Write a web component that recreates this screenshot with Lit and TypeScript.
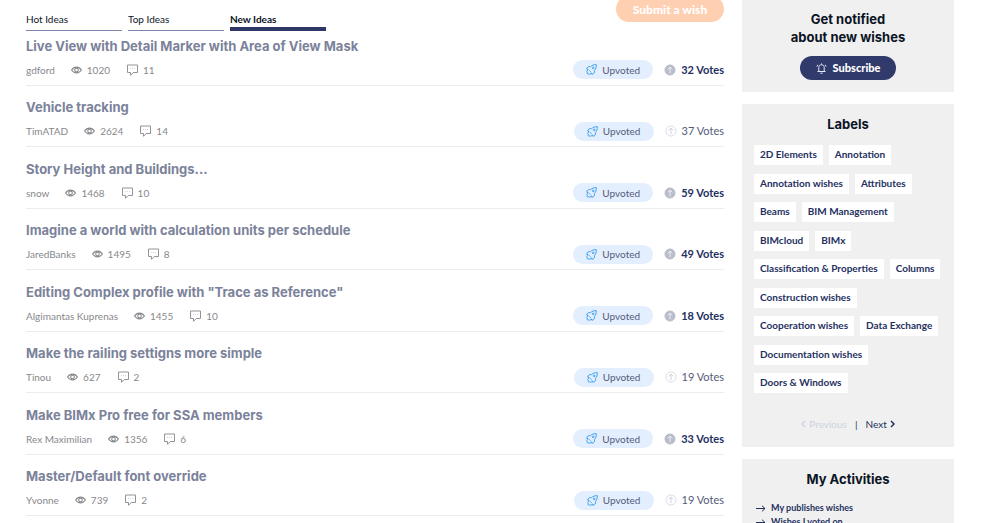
import { LitElement, html, css, svg } from "lit";
import { customElement } from "lit/decorators.js";
import { classMap } from "lit/directives/class-map.js";

interface Idea {
  title: string;
  author: string;
  views: number;
  comments: number;
  votes: number;
  voted: boolean;
}

const ideas: Idea[] = [
  { title: "Live View with Detail Marker with Area of View Mask", author: "gdford", views: 1020, comments: 11, votes: 32, voted: true },
  { title: "Vehicle tracking", author: "TimATAD", views: 2624, comments: 14, votes: 37, voted: false },
  { title: "Story Height and Buildings...", author: "snow", views: 1468, comments: 10, votes: 59, voted: true },
  { title: "Imagine a world with calculation units per schedule", author: "JaredBanks", views: 1495, comments: 8, votes: 49, voted: true },
  { title: 'Editing Complex profile with "Trace as Reference"', author: "Algimantas Kuprenas", views: 1455, comments: 10, votes: 18, voted: true },
  { title: "Make the railing settigns more simple", author: "Tinou", views: 627, comments: 2, votes: 19, voted: false },
  { title: "Make BIMx Pro free for SSA members", author: "Rex Maximilian", views: 1356, comments: 6, votes: 33, voted: true },
  { title: "Master/Default font override", author: "Yvonne", views: 739, comments: 2, votes: 19, voted: false },
];

const labels = [
  "2D Elements", "Annotation", "Annotation wishes", "Attributes", "Beams", "BIM Management",
  "BIMcloud", "BIMx", "Classification & Properties", "Columns", "Construction wishes",
  "Cooperation wishes", "Data Exchange", "Documentation wishes", "Doors & Windows",
];

const eye = svg`<svg class="icon" width="11" height="8" viewBox="0 0 11 8" fill="none" stroke="currentColor" stroke-width="1.100" aria-hidden="true"><path d="M.6 4C3 .2 8 .2 10.400 4C8 7.800 3 7.800 .6 4Z"/><circle cx="5.500" cy="4" r="1.800"/></svg>`;
const bubble = svg`<svg class="icon" width="11" height="12" viewBox="0 0 11 12" fill="none" stroke="currentColor" stroke-width=".9" aria-hidden="true"><path d="M.5 1H10.500V8.500H6.300L3.500 11.300V8.500H.5Z"/><path d="M3 4.500H8" stroke-dasharray="1 1" opacity=".4"/></svg>`;
const rocket = svg`<svg class="icon" width="11" height="11" viewBox="0 0 11 11" fill="none" stroke="#3ba0ec" stroke-linejoin="round" aria-hidden="true"><path d="M10.300 .7C7.600 .6 5.900 1.300 4.600 2.700C2.700 2 1 3.200 .7 5.100L2.300 5.800C.8 6.500 .4 7.500 1.200 8.300C.7 9.600 1.500 10.400 2.800 9.900C3.600 10.700 4.700 10.200 5.200 8.800L5.900 10.300C7.900 10 9 8.400 8.400 6.500C9.700 5.200 10.400 3.400 10.300 .7Z"/><circle cx="7.200" cy="3.900" r=".8"/><path d="M3.300 6C3.400 7 4 7.600 5 7.700" opacity=".6"/></svg>`;
const bell = svg`<svg class="icon" width="11" height="11" viewBox="0 0 11 11" fill="none" stroke="#e6e8f2" aria-hidden="true"><path d="M1.500 8.500H9.500M2.800 8.500V4.300C2.800 .9 8.200 .9 8.200 4.300V8.500M4.400 10.200H6.600M1 3.600L1.700 1.800M10 3.600L9.300 1.800M5.500 .4V1.600"/></svg>`;
const arrow = svg`<svg class="icon" width="10" height="7" viewBox="0 0 10 7" fill="none" stroke="currentColor" aria-hidden="true"><path d="M0 3.500H9M6 .7L9 3.500L6 6.300"/></svg>`;
const chevron = (d: string) => svg`<svg class="icon" width="5" height="8" viewBox="0 0 5 8" fill="none" stroke="currentColor" stroke-width="1.500" aria-hidden="true"><path d=${d}/></svg>`;
const voteIcon = (on: boolean) => svg`<svg class="icon" width="12" height="12" viewBox="0 0 12 12" fill="none" aria-hidden="true"><circle cx="6" cy="6" r="5" fill=${on ? "#b9bcca" : "none"} stroke=${on ? "#b9bcca" : "#dcdee7"}/><path d="M6 9.200V3M3.700 5.400L6 3.100L8.300 5.400" stroke=${on ? "#eceef3" : "#cfd2de"}/></svg>`;

@customElement("app-root")
export class AppRoot extends LitElement {
  static styles = css`
    :host {
      display: block;
      height: 100vh;
      overflow: hidden;
      background: #fff;
      color: #0b1424;
      font: 10px/14px Lato, "Open Sans", sans-serif;
    }
    * { box-sizing: border-box; }
    a { color: inherit; text-decoration: none; }
    button { border: 0; margin: 0; font: inherit; cursor: pointer; }
    h2, h3, ul { margin: 0; padding: 0; list-style: none; }
    .icon { display: block; flex: none; }
    .page {
      display: grid;
      grid-template-columns: minmax(0, 1fr) 212px;
      gap: 18px;
      padding: 0 44px 0 26px;
    }
    .top { display: flex; justify-content: space-between; align-items: flex-start; height: 31px; }
    .tabs { display: flex; gap: 6px; padding-top: 12px; }
    .tab { width: 96px; height: 19px; border-bottom: 1px solid #7f86ae; white-space: nowrap; }
    .tab.active { border-bottom: 4px solid #2e3766; font-weight: 700; }
    .submit {
      height: 26px;
      width: 108px;
      margin-top: -4px;
      padding: 2px 0 0;
      border-radius: 13px;
      background: #ffcfb1;
      color: #fff;
      font-size: 12px;
      font-weight: 900;
    }
    .ideas { display: grid; grid-auto-rows: 1fr; min-height: 492px; margin-top: -7px; }
    .idea { display: flex; flex-direction: column; justify-content: flex-end; border-bottom: 1px solid #ececee; padding-bottom: 5px; }
    .title { font: 700 13px/18px Inter, sans-serif; color: #7b829a; }
    .row { display: flex; align-items: center; justify-content: space-between; margin-top: 5px; height: 20px; }
    .meta { display: flex; align-items: center; color: #87888c; }
    .views { display: flex; align-items: center; gap: 5px; margin: 0 17px 0 16px; }
    .comments { display: flex; align-items: center; gap: 5px; }
    .voting { display: flex; align-items: center; gap: 11px; }
    .upvoted {
      display: flex; align-items: center; justify-content: center; gap: 5px;
      width: 80px; height: 19px; padding: 0; border-radius: 10px;
      background: #e3eeff; color: #545b78;
    }
    .votes { display: flex; align-items: center; gap: 5px; font-size: 11px; color: #545b78; }
    .votes.voted { color: #25305f; font-weight: 700; }
    .side { display: flex; flex-direction: column; gap: 12px; }
    .card { background: #f0f0f0; padding: 0 12px; }
    .heading { font: 700 13px/18px Inter, sans-serif; text-align: center; }
    .notify { height: 92px; padding-top: 10px; display: flex; flex-direction: column; align-items: center; }
    .subscribe {
      display: flex; align-items: center; justify-content: center; gap: 6px;
      width: 96px; height: 24px; margin-top: 10px; padding: 0; border-radius: 12px;
      background: #303a6b; color: #fff; font-size: 11px; font-weight: 900;
    }
    .labels { padding-top: 11px; padding-bottom: 16px; }
    .tags { display: flex; flex-wrap: wrap; align-content: space-between; column-gap: 6px; min-height: 248px; margin-top: 12px; }
    .tag { display: block; height: 20px; line-height: 19px; padding: 0 6px; background: #fff; color: #25305f; font-weight: 700; }
    .pager { display: flex; justify-content: center; align-items: center; gap: 8px; margin-top: 24px; color: #25305f; }
    .step { display: flex; align-items: center; gap: 3px; }
    .step.off { color: #cdd3e0; }
    .activities { padding-top: 11px; padding-bottom: 16px; }
    .links { margin-top: 13px; }
    .link { display: flex; align-items: center; gap: 5px; padding-left: 2px; color: #25305f; font-size: 9px; font-weight: 700; }
  `;

  render() {
    return html`
      <div class="page">
        <main>
          <div class="top">
            <nav class="tabs">
              ${["Hot Ideas", "Top Ideas", "New Ideas"].map(
                (name) => html`<a href="#" class=${classMap({ tab: true, active: name === "New Ideas" })}>${name}</a>`
              )}
            </nav>
            <button class="submit">Submit a wish</button>
          </div>
          <ul class="ideas">${ideas.map((idea) => this.renderIdea(idea))}</ul>
        </main>
        <aside class="side">
          <section class="card notify">
            <h2 class="heading">Get notified<br />about new wishes</h2>
            <button class="subscribe">${bell}<span>Subscribe</span></button>
          </section>
          <section class="card labels">
            <h2 class="heading">Labels</h2>
            <ul class="tags">${labels.map((l) => html`<li><a class="tag" href="#">${l}</a></li>`)}</ul>
            <nav class="pager">
              <a href="#" class="step off">${chevron("M4 1L1 4L4 7")}<span>Previous</span></a>
              <span>|</span>
              <a href="#" class="step"><span>Next</span>${chevron("M1 1L4 4L1 7")}</a>
            </nav>
          </section>
          <section class="card activities">
            <h2 class="heading">My Activities</h2>
            <ul class="links">
              ${["My publishes wishes", "Wishes I voted on"].map(
                (l) => html`<li><a class="link" href="#">${arrow}<span>${l}</span></a></li>`
              )}
            </ul>
          </section>
        </aside>
      </div>
    `;
  }

  private renderIdea(idea: Idea) {
    return html`
      <li class="idea">
        <h3 class="title"><a href="#">${idea.title}</a></h3>
        <div class="row">
          <div class="meta">
            <a href="#">${idea.author}</a>
            <span class="views">${eye}<span>${idea.views}</span></span>
            <span class="comments">${bubble}<span>${idea.comments}</span></span>
          </div>
          <div class="voting">
            <button class="upvoted">${rocket}<span>Upvoted</span></button>
            <span class=${classMap({ votes: true, voted: idea.voted })}>${voteIcon(idea.voted)}<span>${idea.votes} Votes</span></span>
          </div>
        </div>
      </li>
    `;
  }
}
